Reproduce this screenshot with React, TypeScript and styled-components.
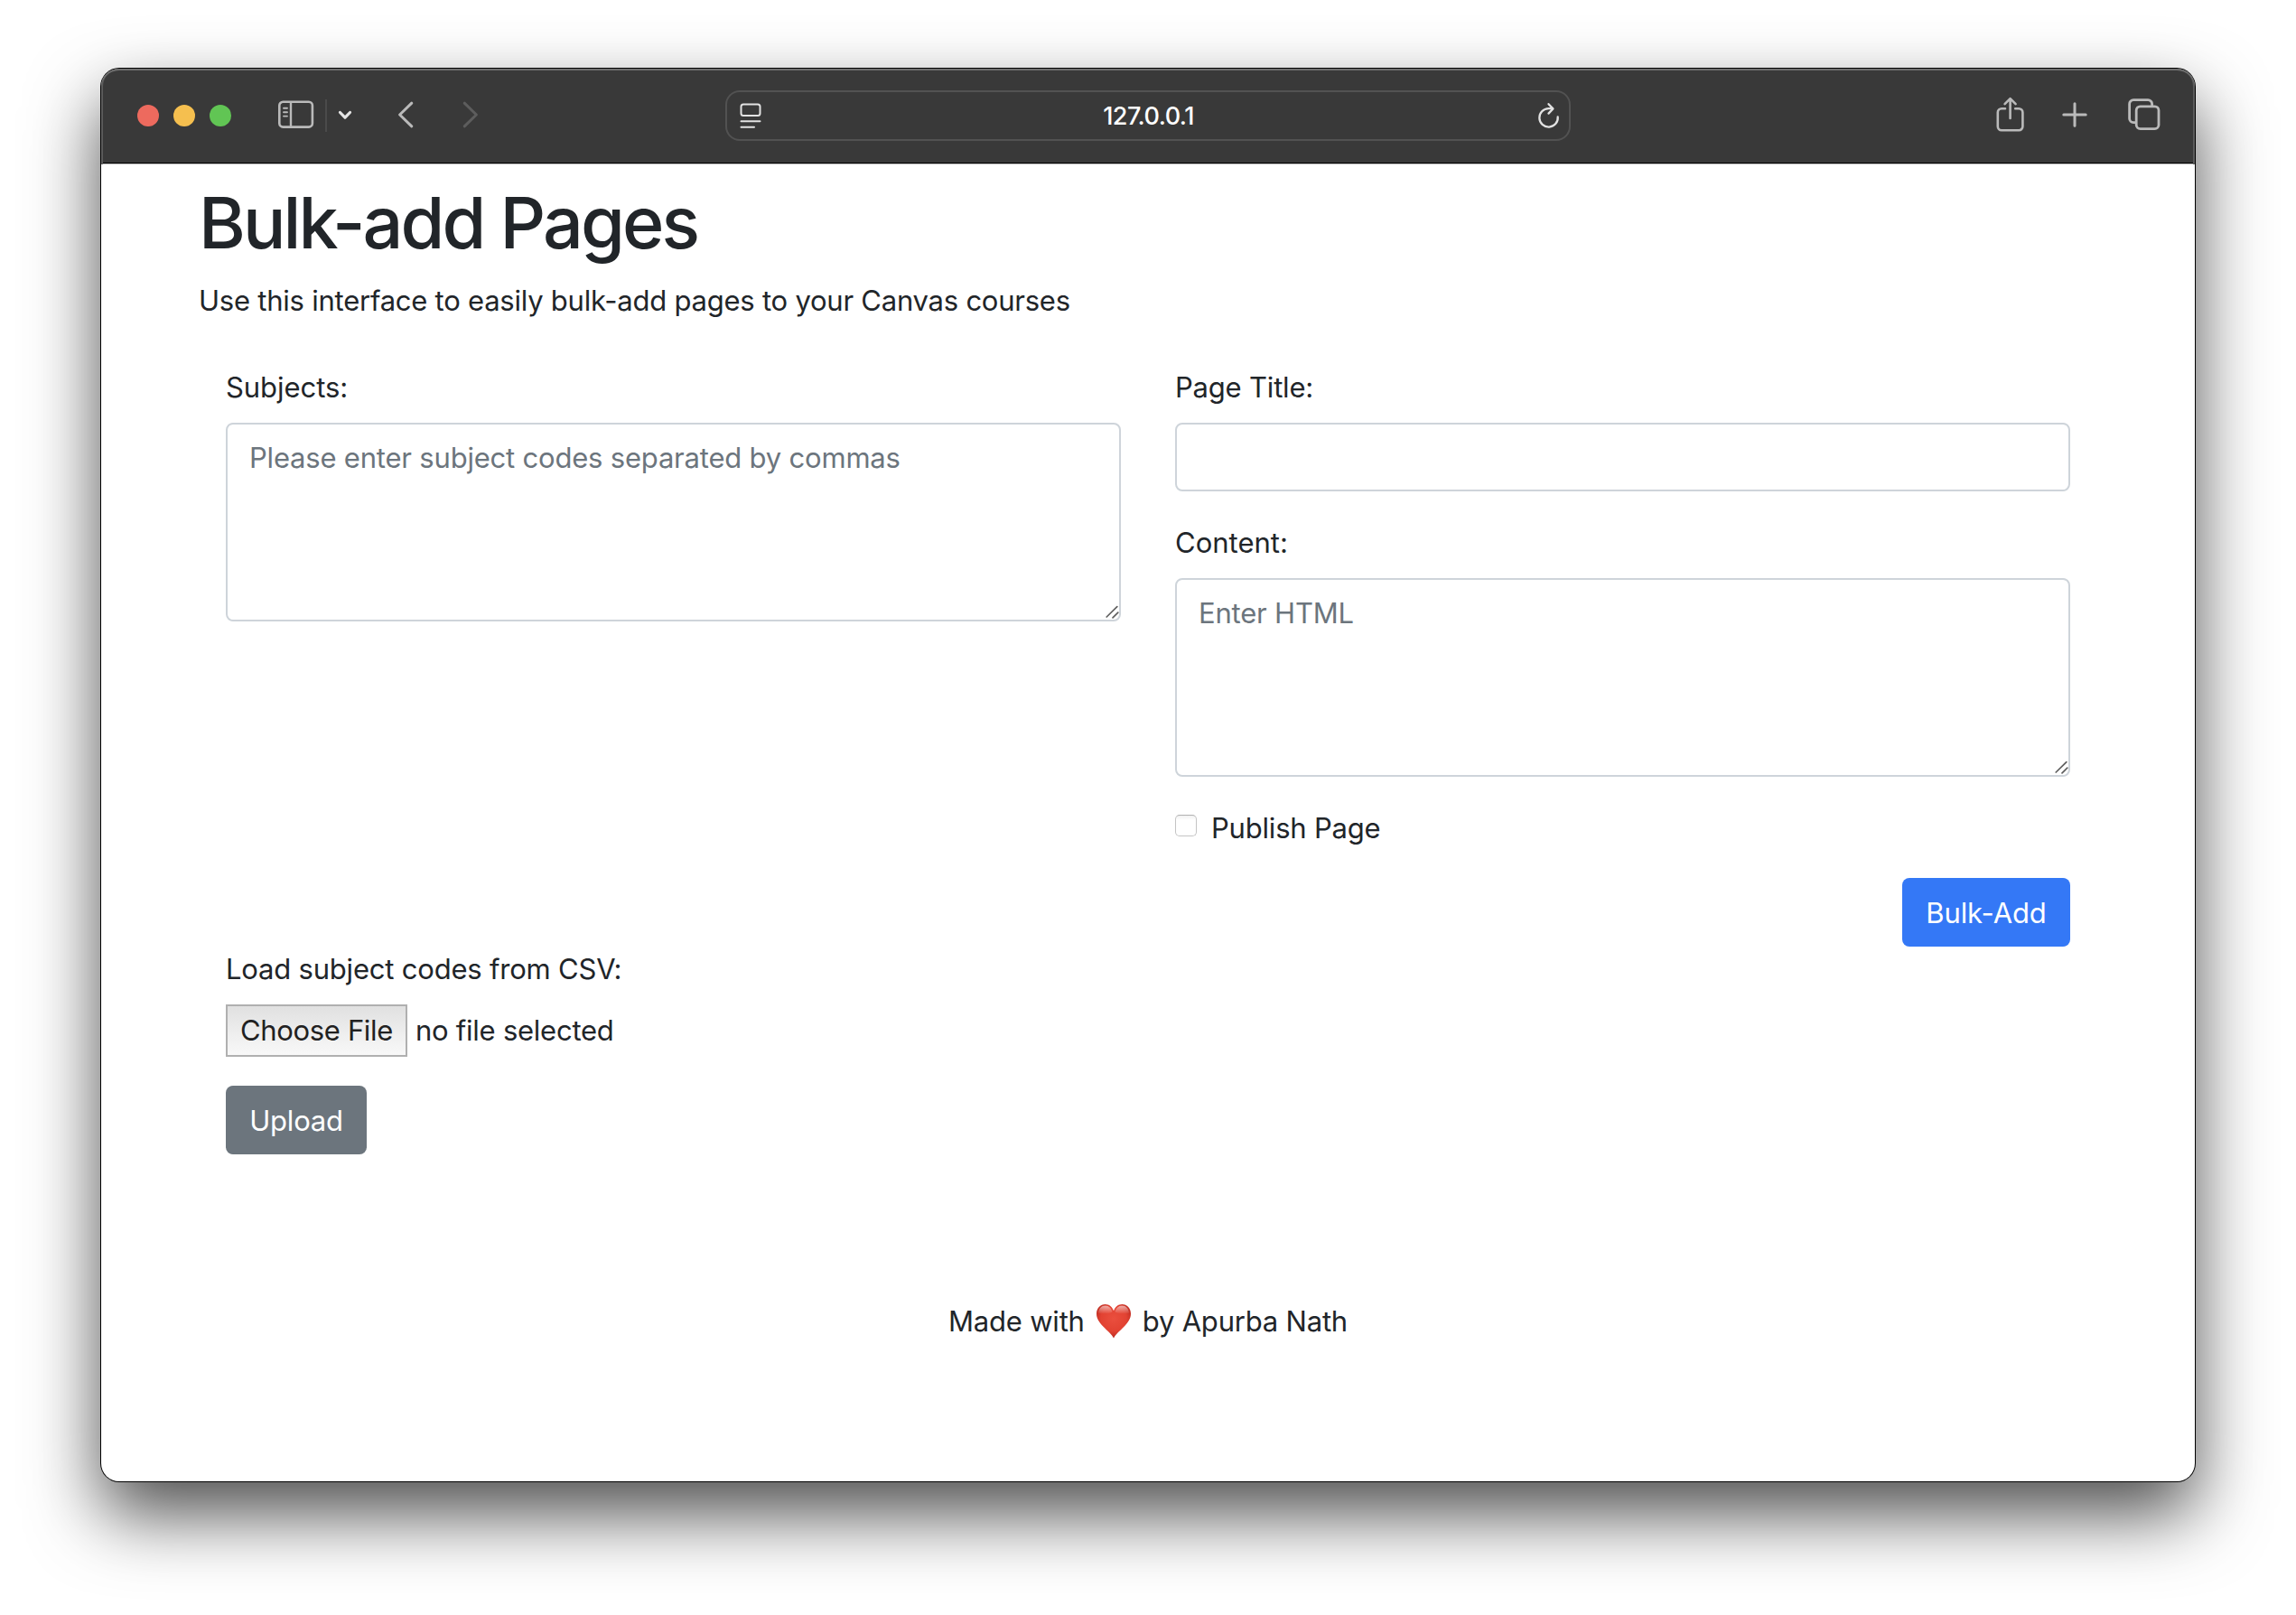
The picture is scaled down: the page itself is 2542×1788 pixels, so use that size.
import React from "react";
import styled, { createGlobalStyle } from "styled-components";

const GlobalStyle = createGlobalStyle`
  * { box-sizing: border-box; }
  html, body { margin: 0; background: #fff; }
  body { font-family: Inter, "Liberation Sans", sans-serif; color: #212529; }
  svg { display: block; flex: none; }
`;

const Desktop = styled.div`
  width: 2542px;
  height: 1788px;
  padding: 76px 112px 148px;
  overflow: hidden;
  background: #fff;
`;

const Window = styled.div`
  height: 1564px;
  display: flex;
  flex-direction: column;
  border-radius: 20px;
  background: #fff;
  box-shadow: 0 0 0 1px #000, 0 36px 80px rgba(0, 0, 0, 0.7);
`;

const TitleBar = styled.header`
  height: 106px;
  flex: none;
  display: flex;
  align-items: center;
  justify-content: space-between;
  padding: 0 38px 2px 40px;
  border-radius: 20px 20px 0 0;
  background: #393939;
  box-shadow: inset 0 2px 0 #6e6e6e, inset 2px 0 0 #5b5b5b, inset -2px 0 0 #5b5b5b,
    inset 0 -1px 0 #b5b5b5, inset 0 -2px 0 #000;
`;

const BarSide = styled.div<{ $end?: boolean }>`
  width: 650px;
  display: flex;
  align-items: center;
  justify-content: ${(p) => (p.$end ? "flex-end" : "flex-start")};
`;

const Lights = styled.div`
  display: flex;
  gap: 16px;
  margin-right: 50px;
`;

const Light = styled.span<{ $color: string }>`
  width: 24px;
  height: 24px;
  border-radius: 50%;
  background: ${(p) => p.$color};
`;

const Divider = styled.span`
  width: 2px;
  height: 36px;
  margin: 0 12px;
  background: #4a4a4a;
`;

const IconSlot = styled.span<{ $ml?: number; $lift?: number }>`
  display: flex;
  margin-left: ${(p) => p.$ml ?? 0}px;
  padding-bottom: ${(p) => p.$lift ?? 2}px;
`;

const AddressBar = styled.div`
  width: 936px;
  height: 56px;
  flex: none;
  margin-left: 1px;
  margin-right: 3px;
  display: flex;
  align-items: center;
  justify-content: space-between;
  padding: 0 10px 0 14px;
  border: 2px solid #525252;
  border-radius: 16px;
`;

const Address = styled.span`
  margin-right: 3px;
  font-size: 27px;
  font-weight: 500;
  letter-spacing: -0.5px;
  color: #fff;
`;

const Page = styled.main`
  flex: 1;
  padding: 16px 108px 0;
  font-size: 31px;
  line-height: 48px;
  letter-spacing: -0.2px;
`;

const Heading = styled.h1`
  margin: 0 0 15px;
  font-size: 79px;
  font-weight: 500;
  line-height: 96px;
  letter-spacing: -2.9px;
`;

const Lead = styled.p`
  margin: 0 0 47px;
  letter-spacing: -0.235px;
`;

const Text = styled.span<{ $ls?: number }>`
  letter-spacing: ${(p) => (p.$ls === undefined ? "inherit" : `${p.$ls}px`)};
  white-space: nowrap;
`;

const Columns = styled.div`
  display: grid;
  grid-template-columns: 991px 991px;
  column-gap: 60px;
  padding: 0 30px;
`;

const Group = styled.div`
  margin-bottom: 32px;
`;

const Label = styled.label`
  display: block;
  padding-top: 1px;
  margin-bottom: 15px;
`;

const Field = styled.div`
  position: relative;
  display: flex;
`;

const inputStyle = `
  width: 100%;
  margin: 0;
  padding: 13px 24px 11px;
  border: 2px solid #ced4da;
  border-radius: 8px;
  background: #fff;
  color: #495057;
  font: inherit;
  letter-spacing: inherit;
  outline: none;
`;

const Input = styled.input`
  ${inputStyle}
  height: 76px;
`;

const TextArea = styled.textarea`
  ${inputStyle}
  height: 220px;
  resize: none;
  &::placeholder { color: #6c757d; opacity: 1; }
`;

const Grip = styled.svg`
  position: absolute;
  right: 1px;
  bottom: 2px;
`;

const CheckRow = styled.label`
  display: flex;
  align-items: flex-start;
  gap: 16px;
  height: 48px;
  margin-bottom: 32px;
  padding-top: 1px;
`;

const CheckBox = styled.input`
  appearance: none;
  width: 24px;
  height: 24px;
  margin: 9px 0 0;
  border: 1px solid #c4c4c4;
  border-top-color: #b2b2b2;
  border-radius: 5px;
  background: linear-gradient(#f1f1f1, #fff 5px);
`;

const Actions = styled.div`
  display: flex;
  justify-content: flex-end;
`;

const Button = styled.button<{ $bg: string; $w: number; $ls?: number }>`
  width: ${(p) => p.$w}px;
  height: 76px;
  padding: 1px 0 0;
  border: 0;
  border-radius: 8px;
  background: ${(p) => p.$bg};
  color: #fff;
  font: inherit;
  letter-spacing: ${(p) => p.$ls ?? -0.2}px;
`;

const Upload = styled.section`
  padding: 0 30px;
`;

const FileRow = styled.div`
  display: flex;
  align-items: center;
  gap: 9px;
  height: 58px;
  margin-bottom: 32px;
`;

const FileButton = styled.button`
  width: 201px;
  height: 58px;
  padding: 0;
  border: 2px solid #b0b0b0;
  background: linear-gradient(#e0e0e0, #ededed 50%, #f8f8f8);
  color: #212121;
  font: inherit;
  letter-spacing: -0.35px;
  white-space: nowrap;
`;

const Footer = styled.footer`
  display: flex;
  justify-content: center;
  align-items: center;
  height: 48px;
  margin-top: 161px;
`;

const HeartSlot = styled.span`
  display: flex;
  margin: 0 12px 0 12px;
`;

const ICON = "#bababa";

const SidebarIcon = () => (
  <svg width="40" height="32" viewBox="0 0 40 32" fill="none" stroke={ICON}>
    <rect x="1.3" y="1.8" width="36.6" height="27.8" rx="4" strokeWidth="2.6" />
    <path d="M14 2v27.5" strokeWidth="2.4" />
    <path d="M6 8.8h4M6 13.2h4M6 17.6h4" strokeWidth="1.9" strokeLinecap="round" />
  </svg>
);

const SmallChevron = () => (
  <svg width="16" height="12" viewBox="0 0 16 12" fill="none" stroke="#e6e6e6" strokeWidth="3.2" strokeLinecap="round" strokeLinejoin="round">
    <path d="M2.5 2.5L8 8.2l5.500-5.700" />
  </svg>
);

const Arrow = ({ forward }: { forward?: boolean }) => (
  <svg width="18" height="30" viewBox="0 0 18 30" fill="none" stroke={forward ? "#5d5d5d" : ICON} strokeWidth="3" strokeLinecap="round" strokeLinejoin="round">
    <path d={forward ? "M2.200 2.200L15.400 15L2.200 27.800" : "M15.800 2.200L2.600 15l13.200 12.800"} />
  </svg>
);

const ReaderIcon = () => (
  <svg width="24" height="28" viewBox="0 0 24 28" fill="none" stroke="#e2e2e2" strokeWidth="2">
    <rect x="1.500" y="1.500" width="21" height="12.600" rx="2.500" />
    <path d="M1.500 20.200h21M1.500 26.800h14.500" strokeLinecap="round" />
  </svg>
);

const ReloadIcon = () => (
  <svg width="24" height="30" viewBox="0 0 24 30" fill="none" stroke="#e2e2e2" strokeWidth="2.300" strokeLinecap="round" strokeLinejoin="round">
    <path d="M21.700 16.500A10.200 10.200 0 1 1 11.500 7.200H16" />
    <path d="M11.500 2.200L16.400 7.400L11.500 12.600" />
  </svg>
);

const ShareIcon = () => (
  <svg width="32" height="40" viewBox="0 0 32 40" fill="none" stroke={ICON} strokeWidth="2.600" strokeLinecap="round" strokeLinejoin="round">
    <path d="M10 13.200H6a4.200 4.200 0 0 0-4.200 4.200v15.600A4.200 4.200 0 0 0 6 37.200h19.200a4.200 4.200 0 0 0 4.200-4.200V17.400a4.200 4.200 0 0 0-4.200-4.200h-4" />
    <path d="M15.600 24V2.400M9.600 8.200L15.600 2.200l6 6" />
  </svg>
);

const PlusIcon = () => (
  <svg width="28" height="28" viewBox="0 0 28 28" fill="none" stroke={ICON} strokeWidth="3" strokeLinecap="round">
    <path d="M14 1.800v24.400M1.800 14h24.400" />
  </svg>
);

const TabsIcon = () => (
  <svg width="36" height="36" viewBox="0 0 36 36" fill="none" stroke={ICON} strokeWidth="2.800">
    <path d="M26.600 8.500V6a4.400 4.400 0 0 0-4.400-4.400H6A4.400 4.400 0 0 0 1.600 6v16.200A4.400 4.400 0 0 0 6 26.600h3" />
    <rect x="9.200" y="8.800" width="24.800" height="24.800" rx="4.400" />
  </svg>
);

const ResizeGrip = () => (
  <Grip width="16" height="16" viewBox="0 0 16 16" fill="none" stroke="#5f5f5f" strokeWidth="1.700" strokeLinecap="round">
    <path d="M1.200 13L12.800 1.700M8 13.800L13.800 8.200" />
  </Grip>
);

const Heart = () => (
  <svg width="40" height="40" viewBox="0 0 40 40">
    <defs>
      <radialGradient id="heartFill" cx="0.5" cy="0.42" r="0.62">
        <stop offset="0" stopColor="#ea4f3e" />
        <stop offset="0.6" stopColor="#e24232" />
        <stop offset="1" stopColor="#b3251c" />
      </radialGradient>
      <linearGradient id="heartShine" x1="0" y1="0" x2="0" y2="1">
        <stop offset="0" stopColor="#fff" stopOpacity="0.6" />
        <stop offset="1" stopColor="#fff" stopOpacity="0" />
      </linearGradient>
    </defs>
    <path d="M20 38.500C18 34 12.500 30 8.500 25.700C4 20.800 1 17 1 11.500C1 5.500 5.200 1 10.700 1C15 1 18.500 3.800 20 8.300C21.500 3.800 25 1 29.300 1C34.800 1 39 5.500 39 11.500C39 17 36 20.800 31.500 25.700C27.500 30 22 34 20 38.500Z" fill="url(#heartFill)" />
    <path d="M3 10.500C3.500 5.500 6.500 2.500 10.700 2.500C14.800 2.500 17.500 5.500 18.500 9.500C14 12 6 12.500 3 10.500ZM37 10.500C36.500 5.500 33.500 2.500 29.300 2.500C25.200 2.500 22.500 5.500 21.500 9.500C26 12 34 12.500 37 10.500Z" fill="url(#heartShine)" />
  </svg>
);

export default function App() {
  return (
    <Desktop>
      <GlobalStyle />
      <Window>
        <TitleBar>
          <BarSide>
            <Lights>
              <Light $color="#ed6a5e" />
              <Light $color="#f5bf4f" />
              <Light $color="#61c554" />
            </Lights>
            <IconSlot $ml={2}><SidebarIcon /></IconSlot>
            <Divider />
            <IconSlot $lift={0}><SmallChevron /></IconSlot>
            <IconSlot $ml={50}><Arrow /></IconSlot>
            <IconSlot $ml={54}><Arrow forward /></IconSlot>
          </BarSide>
          <AddressBar>
            <ReaderIcon />
            <Address>127.0.0.1</Address>
            <ReloadIcon />
          </AddressBar>
          <BarSide $end>
            <IconSlot><ShareIcon /></IconSlot>
            <IconSlot $ml={41}><PlusIcon /></IconSlot>
            <IconSlot $ml={45}><TabsIcon /></IconSlot>
          </BarSide>
        </TitleBar>
        <Page>
          <Heading>Bulk-add Pages</Heading>
          <Lead><Text>Use this interface to easily bulk-add pages to your Canvas courses</Text></Lead>
          <Columns>
            <div>
              <Group>
                <Label htmlFor="subjects"><Text $ls={-0.05}>Subjects:</Text></Label>
                <Field>
                  <TextArea id="subjects" placeholder="Please enter subject codes separated by commas" />
                  <ResizeGrip />
                </Field>
              </Group>
            </div>
            <div>
              <Group>
                <Label htmlFor="title"><Text>Page Title:</Text></Label>
                <Field><Input id="title" type="text" /></Field>
              </Group>
              <Group>
                <Label htmlFor="content"><Text $ls={0}>Content:</Text></Label>
                <Field>
                  <TextArea id="content" placeholder="Enter HTML" />
                  <ResizeGrip />
                </Field>
              </Group>
              <CheckRow>
                <CheckBox type="checkbox" />
                <Text>Publish Page</Text>
              </CheckRow>
              <Actions>
                <Button $bg="#3478f6" $w={186} $ls={-0.1}>Bulk-Add</Button>
              </Actions>
            </div>
          </Columns>
          <Upload>
            <Label as="div"><Text>Load subject codes from CSV:</Text></Label>
            <FileRow>
              <FileButton>Choose File</FileButton>
              <Text $ls={-0.25}>no file selected</Text>
            </FileRow>
            <Button $bg="#6c757d" $w={156}>Upload</Button>
          </Upload>
          <Footer>
            <Text>Made with</Text>
            <HeartSlot><Heart /></HeartSlot>
            <Text>by Apurba Nath</Text>
          </Footer>
        </Page>
      </Window>
    </Desktop>
  );
}
